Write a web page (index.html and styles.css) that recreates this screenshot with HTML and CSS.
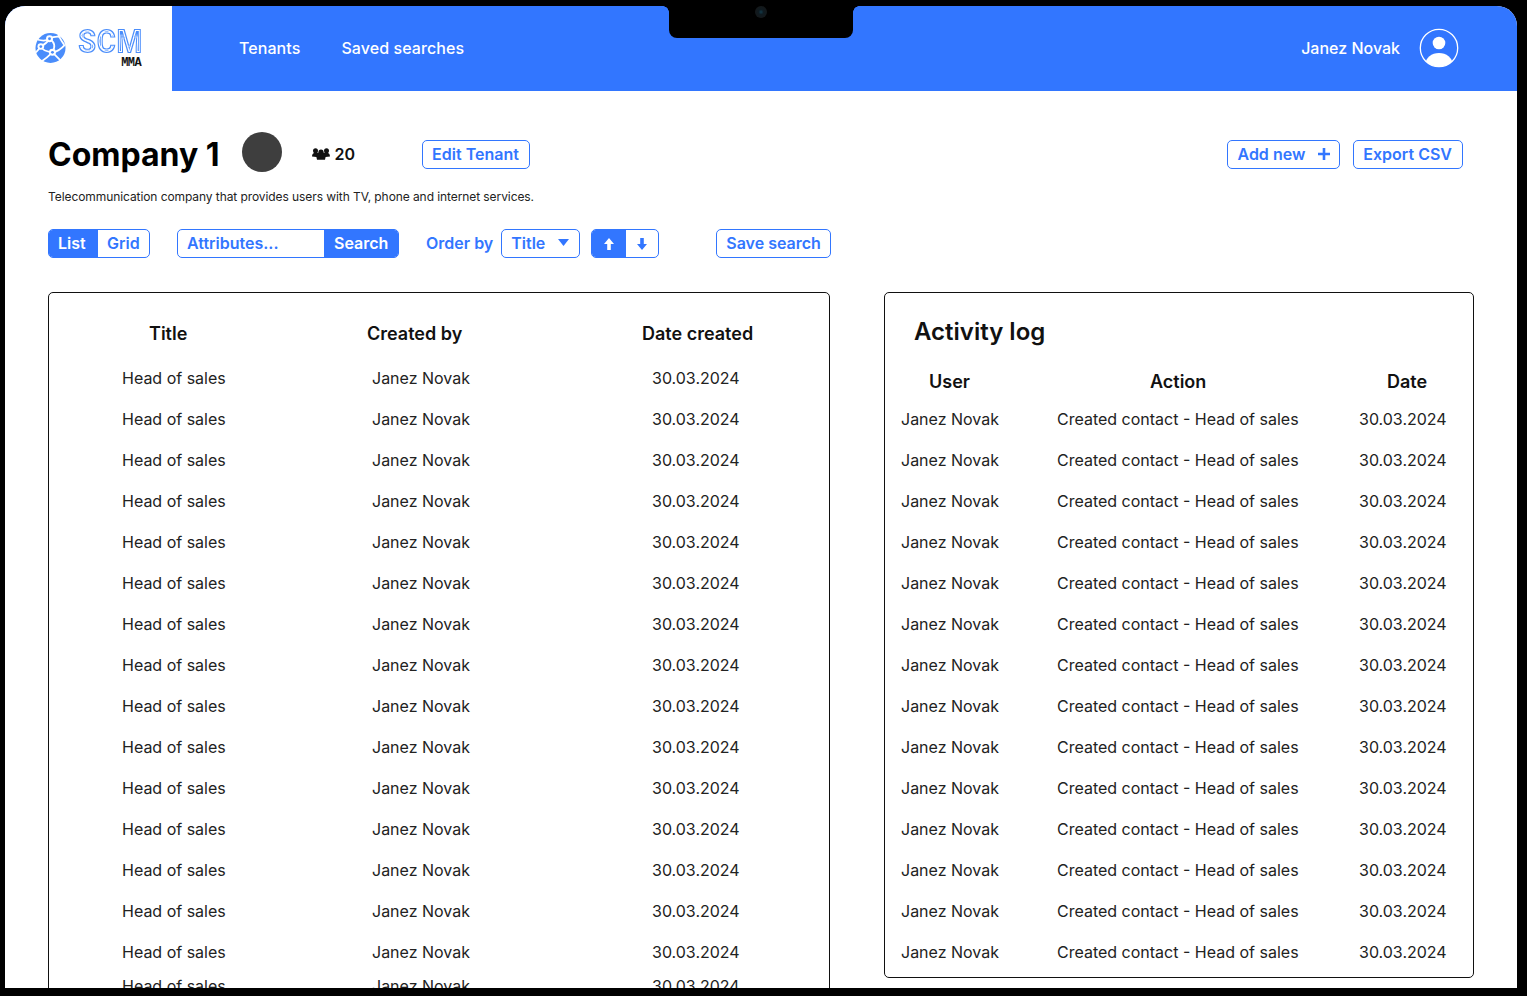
FILE: index.html
```html
<!DOCTYPE html>
<html lang="en">
<head>
  <meta charset="UTF-8">
  <title>SCM MMA - Company 1</title>
  <link rel="stylesheet" href="styles.css">
</head>
<body>
  <svg class="defs" width="0" height="0">
    <filter id="scm-lines" x="-5%" y="-5%" width="110%" height="110%" color-interpolation-filters="sRGB">
      <feFlood flood-color="#4a8dfb" result="blue"/>
      <feFlood flood-color="#fff" result="white"/>
      <feComposite in="blue" in2="SourceAlpha" operator="in" result="outer"/>
      <feMorphology in="SourceAlpha" operator="erode" radius="1" result="eroded1"/>
      <feComposite in="white" in2="eroded1" operator="in" result="gap"/>
      <feMorphology in="SourceAlpha" operator="erode" radius="2" result="eroded2"/>
      <feComposite in="blue" in2="eroded2" operator="in" result="inner"/>
      <feMerge>
        <feMergeNode in="outer"/>
        <feMergeNode in="gap"/>
        <feMergeNode in="inner"/>
      </feMerge>
    </filter>
  </svg>
  <div class="notch"><span class="camera"></span></div>
  <div class="screen">
    <header class="topbar">
      <a class="logo">
        <svg class="logo-globe" width="31" height="32" viewBox="0 0 32 33">
          <circle cx="16" cy="16.5" r="15.500" fill="#4a8dfb"/>
          <g fill="none" stroke="#fff" stroke-width="1.800">
            <path d="M3 8 Q11 10 15 7 Q20 4 26 5"/>
            <path d="M15 7 Q23 12 18 21 Q13 26 6 31"/>
            <path d="M15 7 Q12 12 6 15 Q8 20 18 21 Q25 20 31 13"/>
            <path d="M6 15 Q3 19 1 21"/>
            <path d="M18 21 Q23 26 26 29"/>
            <path d="M24 3 Q27 9 30 13"/>
          </g>
          <g fill="#fff">
            <circle cx="15" cy="7" r="3.600"/>
            <circle cx="6" cy="15" r="3.400"/>
            <circle cx="18" cy="21" r="3.600"/>
          </g>
          <g fill="#4a8dfb">
            <circle cx="15" cy="7" r="1.500"/>
            <circle cx="6" cy="15" r="1.400"/>
            <circle cx="18" cy="21" r="1.500"/>
          </g>
        </svg>
        <span class="logo-text">
          <span class="logo-scm">SCM</span>
          <span class="logo-mma">MMA</span>
        </span>
      </a>
      <nav class="topnav">
        <a>Tenants</a>
        <a>Saved searches</a>
      </nav>
      <div class="user">
        <span>Janez Novak</span>
        <svg width="40" height="40" viewBox="0 0 40 40">
          <defs><clipPath id="avatar"><circle cx="20" cy="20" r="18.700"/></clipPath></defs>
          <circle cx="20" cy="20" r="18.700" fill="none" stroke="#fff" stroke-width="1.300"/>
          <circle cx="20" cy="15" r="6.300" fill="#fff"/>
          <ellipse cx="20" cy="36" rx="13.500" ry="11" fill="#fff" clip-path="url(#avatar)"/>
        </svg>
      </div>
    </header>

    <main class="content">
      <section class="company">
        <h1>Company 1</h1>
        <span class="company-dot"></span>
        <span class="members">
          <svg width="18" height="12" viewBox="0 0 18 12" fill="#111">
            <circle cx="3.500" cy="2.800" r="2.500"/>
            <circle cx="14.500" cy="2.800" r="2.500"/>
            <circle cx="9" cy="4.200" r="2.600"/>
            <path d="M0 8.400C0 5.800 1.600 4.800 3.600 4.800h10.800c2 0 3.600 1 3.600 3.600L13.600 9 13 11.800H5L4.400 9z"/>
          </svg>
          20
        </span>
        <button class="btn btn-edit">Edit Tenant</button>
        <div class="company-actions">
          <button class="btn btn-add">Add new
            <svg width="14" height="14" viewBox="0 0 14 14"><path d="M7 1v12M1 7h12" stroke="#3276ff" stroke-width="2.600" fill="none"/></svg>
          </button>
          <button class="btn">Export CSV</button>
        </div>
      </section>
      <p class="company-desc">Telecommunication company that provides users with TV, phone and internet services.</p>

      <section class="toolbar">
        <div class="group view-switch">
          <span class="seg seg-on">List</span>
          <span class="seg">Grid</span>
        </div>
        <div class="group search">
          <span class="search-input">Attributes...</span>
          <span class="seg seg-on">Search</span>
        </div>
        <span class="order-label">Order by</span>
        <div class="group order-select">
          <span>Title</span>
          <svg width="11" height="7" viewBox="0 0 11 7"><path d="M0 0h11L5.500 7z" fill="#3276ff"/></svg>
        </div>
        <div class="group order-dir">
          <span class="seg seg-on arrow">
            <svg width="10" height="12" viewBox="0 0 10 12"><path d="M5 0l5 6H6.800v6H3.200V6H0z" fill="#fff"/></svg>
          </span>
          <span class="seg arrow">
            <svg width="10" height="12" viewBox="0 0 10 12"><path d="M5 12L0 6h3.200V0h3.600v6H10z" fill="#3276ff"/></svg>
          </span>
        </div>
        <button class="btn btn-save">Save search</button>
      </section>

      <section class="panels">
        <div class="panel panel-contacts">
          <div class="contacts-grid" id="contacts">
            <div class="th">Title</div>
            <div class="th">Created by</div>
            <div class="th">Date created</div>
          </div>
        </div>
        <div class="panel panel-log">
          <h2>Activity log</h2>
          <div class="log-grid" id="log">
            <div class="th">User</div>
            <div class="th">Action</div>
            <div class="th">Date</div>
          </div>
        </div>
      </section>
    </main>
  </div>

  <script>
    function addRows(id, cells, count) {
      const grid = document.getElementById(id);
      for (let i = 0; i < count; i++) {
        cells.forEach(text => {
          const cell = document.createElement('div');
          cell.className = 'td';
          cell.textContent = text;
          grid.appendChild(cell);
        });
      }
    }

    addRows('contacts', ['Head of sales', 'Janez Novak', '30.03.2024'], 16);
    addRows('log', ['Janez Novak', 'Created contact - Head of sales', '30.03.2024'], 14);
  </script>
</body>
</html>
```

FILE: styles.css
```css
* {
  box-sizing: border-box;
}

html, body {
  height: 100%;
}

body {
  margin: 0;
  padding: 6px 10px 8px 5px;
  background: #000;
  font-family: Inter, "Liberation Sans", sans-serif;
  color: #111;
  overflow: hidden;
}

.defs {
  position: absolute;
}

.notch {
  position: absolute;
  left: 669px;
  top: 0;
  width: 184px;
  height: 38px;
  background: #000;
  border-radius: 0 0 8px 8px;
  z-index: 2;
}

.notch::before, .notch::after {
  content: "";
  position: absolute;
  top: 6px;
  width: 6px;
  height: 6px;
}

.notch::before {
  left: -6px;
  background: radial-gradient(circle at 0 100%, transparent 5.500px, #000 6px);
}

.notch::after {
  right: -6px;
  background: radial-gradient(circle at 100% 100%, transparent 5.500px, #000 6px);
}

.camera {
  position: absolute;
  left: 86px;
  top: 6px;
  width: 12px;
  height: 12px;
  border-radius: 50%;
  background: radial-gradient(circle, #123a4a 0, #0f1a20 30%, #14181a 70%);
}

.screen {
  height: 100%;
  background: #fff;
  border-radius: 20px 20px 0 0;
  overflow: hidden;
}

.topbar {
  height: 85px;
  display: flex;
  align-items: center;
  background: #3276ff;
  color: #fff;
  font-size: 16px;
  font-weight: 500;
  letter-spacing: 0.005em;
}

.logo {
  width: 167px;
  height: 100%;
  background: #fff;
  display: flex;
  align-items: center;
  padding-left: 30px;
  gap: 10px;
}

.logo-globe {
  margin-bottom: 1px;
}

.logo-text {
  width: 66px;
  display: flex;
  flex-direction: column;
  align-items: flex-end;
}

.logo-scm {
  font-family: Roboto, sans-serif;
  font-size: 34px;
  font-weight: 900;
  line-height: 24px;
  letter-spacing: 0;
  color: #000;
  transform: scaleX(0.88);
  transform-origin: right center;
  filter: url(#scm-lines);
}

.logo-mma {
  font-family: "Liberation Mono", monospace;
  font-size: 12px;
  font-weight: 700;
  line-height: 10px;
  letter-spacing: -0.6px;
  color: #111;
  margin-top: 5px;
  margin-right: 1px;
}

.topnav {
  display: flex;
  gap: 41px;
  margin-left: 67px;
  margin-bottom: 2px;
}

.user {
  margin-left: auto;
  margin-right: 58px;
  margin-bottom: 2px;
  display: flex;
  align-items: center;
  gap: 19px;
  letter-spacing: 0;
}

.content {
  padding: 0 43px 0 43px;
}

.company {
  display: flex;
  align-items: center;
  height: 40px;
  margin-top: 41px;
}

h1 {
  margin: 6px 0 0;
  font-size: 32px;
  font-weight: 700;
  line-height: 40px;
  color: #000;
}

.company-dot {
  width: 40px;
  height: 40px;
  border-radius: 50%;
  background: #3e3e3e;
  margin-left: 22px;
}

.members {
  display: flex;
  align-items: center;
  gap: 5px;
  margin-top: 3px;
  margin-left: 30px;
  font-size: 16px;
  font-weight: 600;
}

.btn {
  height: 29px;
  margin-top: 5px;
  padding: 0 10px 2px 9px;
  border: 1px solid #3276ff;
  border-radius: 5px;
  background: #fff;
  color: #3276ff;
  font-family: inherit;
  font-size: 16px;
  font-weight: 600;
  white-space: nowrap;
}

.btn-edit {
  margin-left: 67px;
}

.company-actions {
  margin-left: auto;
  margin-right: 11px;
  display: flex;
  gap: 13px;
}

.btn-add {
  display: flex;
  align-items: center;
  gap: 12px;
  padding-right: 8px;
}

.company-desc {
  margin: 17px 0 0;
  font-size: 12px;
  line-height: 16px;
  letter-spacing: -0.08px;
  color: #222;
}

.toolbar {
  display: flex;
  align-items: center;
  margin-top: 24px;
  font-size: 16px;
  font-weight: 600;
  color: #3276ff;
}

.toolbar .btn {
  margin-top: 0;
}

.group {
  display: flex;
  align-items: center;
  height: 29px;
  border: 1px solid #3276ff;
  border-radius: 5px;
  overflow: hidden;
}

.seg {
  height: 100%;
  display: flex;
  align-items: center;
  padding: 0 9px 2px;
}

.seg-on {
  background: #3276ff;
  color: #fff;
}

.view-switch {
  width: 102px;
}

.view-switch .seg-on {
  width: 49px;
}

.search {
  width: 222px;
  margin-left: 27px;
}

.search-input {
  width: 146px;
  padding: 0 0 2px 9px;
}

.search .seg {
  flex: 1;
  padding-left: 10px;
}

.order-label {
  margin-left: 27px;
  padding-bottom: 2px;
}

.order-select {
  width: 79px;
  margin-left: 8px;
  padding: 0 10px 2px 9px;
  justify-content: space-between;
}

.order-dir {
  width: 68px;
  margin-left: 11px;
}

.arrow {
  width: 32px;
  padding: 0;
  justify-content: center;
}

.arrow.seg-on {
  width: 34px;
}

.btn-save {
  margin-left: 57px;
  padding-right: 9px;
}

.panels {
  display: flex;
  align-items: flex-start;
  gap: 54px;
  margin-top: 34px;
}

.panel {
  border: 1px solid #111;
  border-radius: 5px;
  background: #fff;
}

.panel-contacts {
  width: 782px;
  height: 800px;
  overflow: hidden;
}

.panel-log {
  width: 590px;
  height: 686px;
}

.contacts-grid {
  display: grid;
  grid-template-columns: 244px 280px 1fr;
  grid-template-rows: 44px repeat(15, 41px) 27px;
  margin-top: 20px;
}

.log-grid {
  display: grid;
  grid-template-columns: 130px 330px 1fr;
  grid-template-rows: 33px;
  grid-auto-rows: 41px;
  margin-top: 17px;
}

.th, .td {
  display: flex;
  align-items: center;
  font-size: 16px;
  white-space: nowrap;
}

.th {
  font-size: 18px;
  font-weight: 600;
  color: #111;
}

.td {
  color: #222;
}

.contacts-grid .th {
  padding-bottom: 3px;
}

.contacts-grid > :nth-child(3n+1) {
  padding-left: 73px;
}

.contacts-grid > :nth-child(3n+2) {
  padding-left: 79px;
}

.contacts-grid > :nth-child(3n) {
  padding-left: 79px;
}

.contacts-grid .th:nth-child(1) {
  padding-left: 100px;
}

.contacts-grid .th:nth-child(2) {
  padding-left: 74px;
}

.contacts-grid .th:nth-child(3) {
  padding-left: 69px;
}

.log-grid > :nth-child(3n+1) {
  padding-left: 16px;
}

.log-grid > :nth-child(3n+2) {
  padding-left: 42px;
}

.log-grid > :nth-child(3n) {
  padding-left: 14px;
}

.log-grid .th:nth-child(1) {
  padding-left: 44px;
}

.log-grid .th:nth-child(2) {
  padding-left: 135px;
}

.log-grid .th:nth-child(3) {
  padding-left: 42px;
}

h2 {
  margin: 23px 0 0 29px;
  font-size: 24px;
  line-height: 32px;
  font-weight: 600;
  color: #111;
}
```
